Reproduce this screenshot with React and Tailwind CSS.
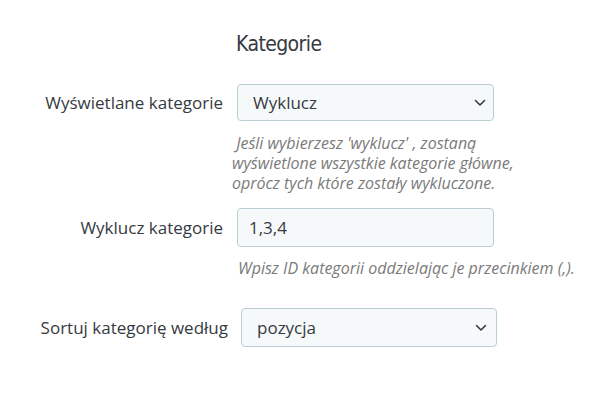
import React from "react";

function Chevron() {
  return (
    <svg width="12" height="8" viewBox="0 0 12 8" fill="none" className="shrink-0">
      <path d="M1.5 1.5L6 6L10.5 1.5" stroke="#363a41" strokeWidth="1.6" strokeLinecap="round" strokeLinejoin="round" />
    </svg>
  );
}

export default function App() {
  const font = { fontFamily: '"Open Sans", "Noto Sans", sans-serif' };
  return (
    <div className="w-[600px] h-[400px] bg-white text-[#363a41]" style={font}>
      <div className="pt-[29px] pl-[236px]">
        <h2 className="text-[21px] leading-[30px] text-[#363a41] font-normal tracking-[-0.6px]" style={{ fontFamily: '"DejaVu Sans Condensed", "DejaVu Sans", sans-serif' }}>
          Kategorie
        </h2>
      </div>

      <div className="mt-[25px] flex items-center">
        <div className="w-[225px] pr-[2px] text-right text-[17px]">Wyświetlane kategorie</div>
        <div className="ml-[12px] w-[257px] h-[37px] border border-[#bbcdd2] rounded-[4px] bg-[#f6f9fa] flex items-center justify-between pl-[15px] pr-[7px] text-[17px]">
          <span>Wyklucz</span>
          <Chevron />
        </div>
      </div>
      <div className="mt-[12px] pl-[232px] text-[16px] leading-[20px] italic text-[#7a7a7a]">
        &nbsp;Jeśli wybierzesz 'wyklucz' , zostaną<br />
        wyświetlone wszystkie kategorie główne,<br />
        oprócz tych które zostały wykluczone.
      </div>

      <div className="mt-[15px] flex items-center">
        <div className="w-[225px] pr-[2px] text-right text-[17px]">Wyklucz kategorie</div>
        <div className="ml-[12px] w-[257px] h-[39px] border border-[#bbcdd2] rounded-[4px] bg-[#f6f9fa] flex items-center pl-[11px] text-[17px]">
          1,3,4
        </div>
      </div>
      <div className="mt-[11px] pl-[238px] text-[16px] leading-[20px] italic text-[#7a7a7a]">
        Wpisz ID kategorii oddzielając je przecinkiem (,).
      </div>

      <div className="mt-[30px] flex items-center">
        <div className="w-[229px] pr-[1px] text-right text-[17px]">Sortuj kategorię według</div>
        <div className="ml-[12px] w-[256px] h-[39px] border border-[#bbcdd2] rounded-[4px] bg-[#f6f9fa] flex items-center justify-between pl-[15px] pr-[9px] text-[17px]">
          <span>pozycja</span>
          <Chevron />
        </div>
      </div>
    </div>
  );
}
